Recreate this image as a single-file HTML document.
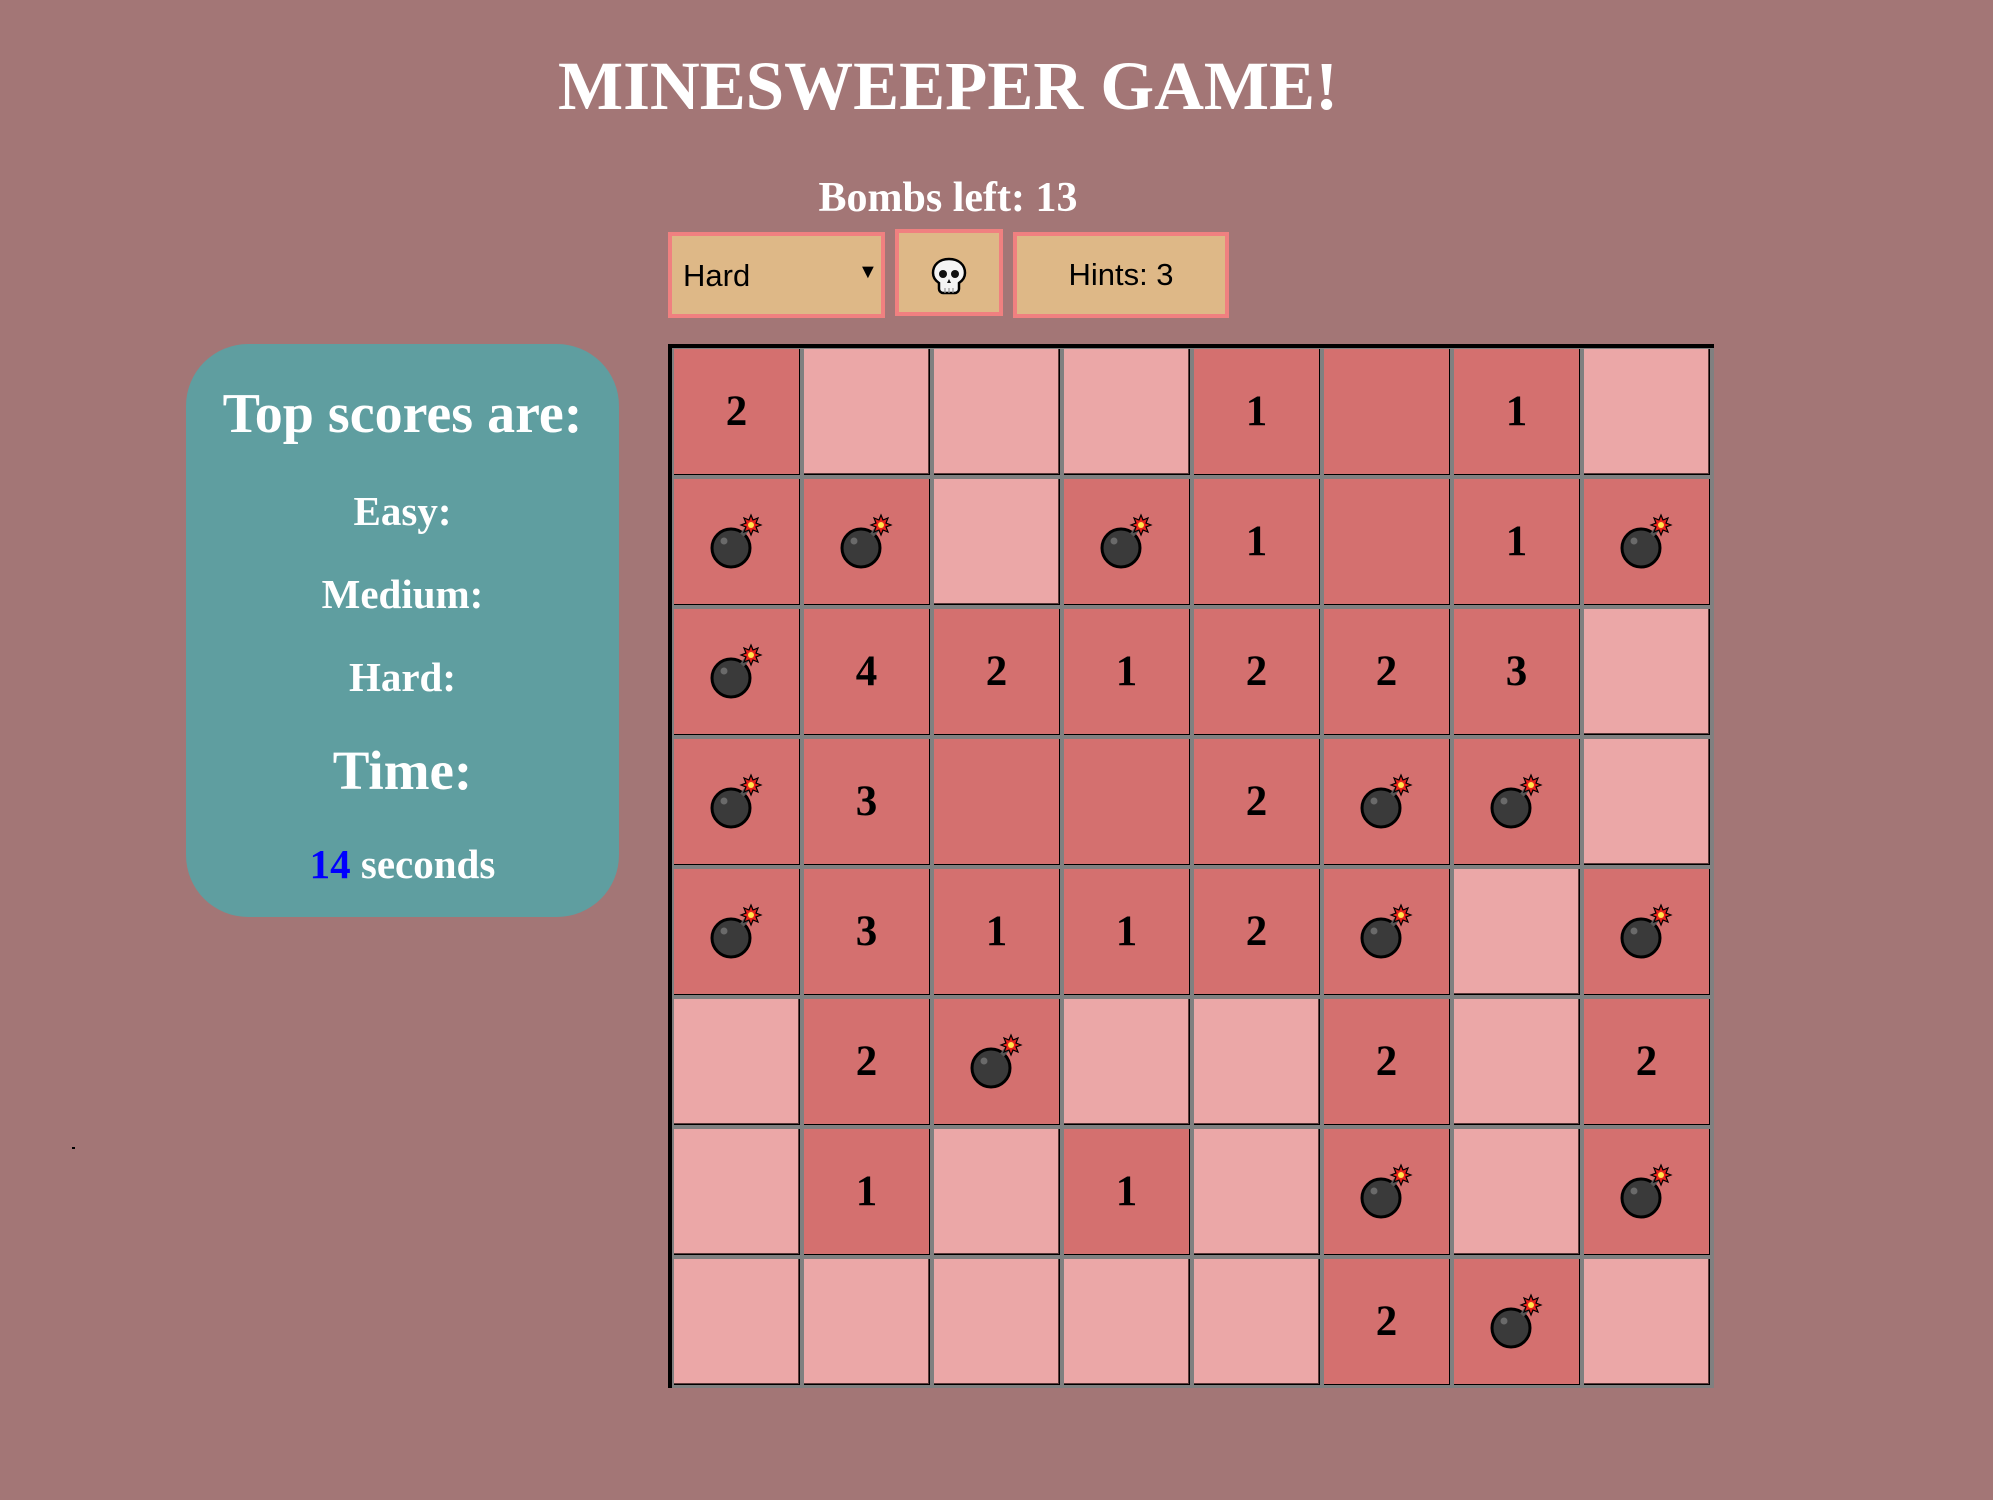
<!DOCTYPE html>
<html><head><meta charset="utf-8">
<style>
html,body{margin:0;padding:0;}
body{width:1993px;height:1500px;background:#a37676;position:relative;overflow:hidden;font-family:"Liberation Serif",serif;}
.t{position:absolute;color:#fff;font-weight:bold;white-space:nowrap;text-align:center;}
.box{position:absolute;background:#deb887;border:4px solid #f08080;box-sizing:border-box;font-family:"Liberation Sans",sans-serif;color:#000;font-size:31px;}
#panel{position:absolute;left:186px;top:344px;width:433px;height:573px;background:#5f9ea0;border-radius:62px;}
#grid{position:absolute;left:668px;top:344px;width:1042px;height:1040px;background:#808080;border-top:4px solid #000;border-left:4px solid #000;}
.c{position:absolute;width:125px;height:125px;border-right:1px solid #000;border-bottom:1px solid #000;font-weight:bold;font-size:43px;line-height:125px;text-align:center;color:#000;}
.d{background:#d4706f;}
.l{background:#eba7a7;box-shadow:inset -1px -1px 0 #5a3a3a;}
.c svg{position:absolute;left:0;top:0;}
</style></head><body>
<div class="t" style="left:0;width:1896px;top:46px;font-size:69px;line-height:80px;">MINESWEEPER GAME!</div>
<div class="t" style="left:0;width:1896px;top:173px;font-size:42px;line-height:50px;">Bombs left: 13</div>

<div class="box" style="left:668px;top:232px;width:217px;height:86px;"><span style="position:absolute;left:11px;top:22px;">Hard</span><span style="position:absolute;left:186px;top:25px;font-size:20px;">&#9660;</span></div>
<div class="box" style="left:895px;top:229px;width:108px;height:87px;">
<svg width="40" height="40" viewBox="0 0 40 40" style="position:absolute;left:30px;top:23px;"><path d="M20 3C10 3 4 9 4 17c0 5 3 8 6 10v6c0 2 2 4 4 4h12c2 0 4-2 4-4v-6c3-2 6-5 6-10C36 9 30 3 20 3z" fill="#f4f4f4" stroke="#000" stroke-width="2.5"/><circle cx="14" cy="18" r="4" fill="#111"/><circle cx="26" cy="18" r="4" fill="#111"/><path d="M20 23l-2 4h4z" fill="#111"/><path d="M16 32v5M20 32v5M24 32v5" stroke="#999" stroke-width="1.2"/></svg>
</div>
<div class="box" style="left:1013px;top:232px;width:216px;height:86px;text-align:center;line-height:78px;">Hints: 3</div>

<div id="panel">
<div class="t" style="left:0;width:433px;top:38px;font-size:56px;line-height:64px;">Top scores are:</div>
<div class="t" style="left:0;width:433px;top:144px;font-size:41px;line-height:46px;">Easy:</div>
<div class="t" style="left:0;width:433px;top:227px;font-size:41px;line-height:46px;">Medium:</div>
<div class="t" style="left:0;width:433px;top:310px;font-size:41px;line-height:46px;">Hard:</div>
<div class="t" style="left:0;width:433px;top:395px;font-size:55px;line-height:64px;">Time:</div>
<div class="t" style="left:0;width:433px;top:496px;font-size:41px;line-height:48px;"><span style="color:#0000ff;">14</span> seconds</div>
</div>
<div style="position:absolute;left:72px;top:1147px;width:3px;height:2px;background:#000;"></div>

<div id="grid">
<!-- row 0 -->
<div class="c d" style="left:2px;top:1px">2</div>
<div class="c l" style="left:132px;top:1px"></div>
<div class="c l" style="left:262px;top:1px"></div>
<div class="c l" style="left:392px;top:1px"></div>
<div class="c d" style="left:522px;top:1px">1</div>
<div class="c d" style="left:652px;top:1px"></div>
<div class="c d" style="left:782px;top:1px">1</div>
<div class="c l" style="left:912px;top:1px"></div>
<!-- row 1 -->
<div class="c d" style="left:2px;top:131px"><svg width="126" height="126"><circle cx="57" cy="69" r="19" fill="#3a3a3a" stroke="#000" stroke-width="3"/><circle cx="50" cy="62" r="3.5" fill="#6a6a6a"/><path d="M68 56l6-7" stroke="#555" stroke-width="5"/><path d="M77 36l2 5 5-2-2 5 5 2-5 2 2 5-5-2-2 5-2-5-5 2 2-5-5-2 5-2-2-5 5 2z" fill="#e8201c" stroke="#000" stroke-width="1.2"/><circle cx="77" cy="46" r="3" fill="#ffe04a"/></svg></div>
<div class="c d" style="left:132px;top:131px"><svg width="126" height="126"><circle cx="57" cy="69" r="19" fill="#3a3a3a" stroke="#000" stroke-width="3"/><circle cx="50" cy="62" r="3.5" fill="#6a6a6a"/><path d="M68 56l6-7" stroke="#555" stroke-width="5"/><path d="M77 36l2 5 5-2-2 5 5 2-5 2 2 5-5-2-2 5-2-5-5 2 2-5-5-2 5-2-2-5 5 2z" fill="#e8201c" stroke="#000" stroke-width="1.2"/><circle cx="77" cy="46" r="3" fill="#ffe04a"/></svg></div>
<div class="c l" style="left:262px;top:131px"></div>
<div class="c d" style="left:392px;top:131px"><svg width="126" height="126"><circle cx="57" cy="69" r="19" fill="#3a3a3a" stroke="#000" stroke-width="3"/><circle cx="50" cy="62" r="3.5" fill="#6a6a6a"/><path d="M68 56l6-7" stroke="#555" stroke-width="5"/><path d="M77 36l2 5 5-2-2 5 5 2-5 2 2 5-5-2-2 5-2-5-5 2 2-5-5-2 5-2-2-5 5 2z" fill="#e8201c" stroke="#000" stroke-width="1.2"/><circle cx="77" cy="46" r="3" fill="#ffe04a"/></svg></div>
<div class="c d" style="left:522px;top:131px">1</div>
<div class="c d" style="left:652px;top:131px"></div>
<div class="c d" style="left:782px;top:131px">1</div>
<div class="c d" style="left:912px;top:131px"><svg width="126" height="126"><circle cx="57" cy="69" r="19" fill="#3a3a3a" stroke="#000" stroke-width="3"/><circle cx="50" cy="62" r="3.5" fill="#6a6a6a"/><path d="M68 56l6-7" stroke="#555" stroke-width="5"/><path d="M77 36l2 5 5-2-2 5 5 2-5 2 2 5-5-2-2 5-2-5-5 2 2-5-5-2 5-2-2-5 5 2z" fill="#e8201c" stroke="#000" stroke-width="1.2"/><circle cx="77" cy="46" r="3" fill="#ffe04a"/></svg></div>
<!-- row 2 -->
<div class="c d" style="left:2px;top:261px"><svg width="126" height="126"><circle cx="57" cy="69" r="19" fill="#3a3a3a" stroke="#000" stroke-width="3"/><circle cx="50" cy="62" r="3.5" fill="#6a6a6a"/><path d="M68 56l6-7" stroke="#555" stroke-width="5"/><path d="M77 36l2 5 5-2-2 5 5 2-5 2 2 5-5-2-2 5-2-5-5 2 2-5-5-2 5-2-2-5 5 2z" fill="#e8201c" stroke="#000" stroke-width="1.2"/><circle cx="77" cy="46" r="3" fill="#ffe04a"/></svg></div>
<div class="c d" style="left:132px;top:261px">4</div>
<div class="c d" style="left:262px;top:261px">2</div>
<div class="c d" style="left:392px;top:261px">1</div>
<div class="c d" style="left:522px;top:261px">2</div>
<div class="c d" style="left:652px;top:261px">2</div>
<div class="c d" style="left:782px;top:261px">3</div>
<div class="c l" style="left:912px;top:261px"></div>
<!-- row 3 -->
<div class="c d" style="left:2px;top:391px"><svg width="126" height="126"><circle cx="57" cy="69" r="19" fill="#3a3a3a" stroke="#000" stroke-width="3"/><circle cx="50" cy="62" r="3.5" fill="#6a6a6a"/><path d="M68 56l6-7" stroke="#555" stroke-width="5"/><path d="M77 36l2 5 5-2-2 5 5 2-5 2 2 5-5-2-2 5-2-5-5 2 2-5-5-2 5-2-2-5 5 2z" fill="#e8201c" stroke="#000" stroke-width="1.2"/><circle cx="77" cy="46" r="3" fill="#ffe04a"/></svg></div>
<div class="c d" style="left:132px;top:391px">3</div>
<div class="c d" style="left:262px;top:391px"></div>
<div class="c d" style="left:392px;top:391px"></div>
<div class="c d" style="left:522px;top:391px">2</div>
<div class="c d" style="left:652px;top:391px"><svg width="126" height="126"><circle cx="57" cy="69" r="19" fill="#3a3a3a" stroke="#000" stroke-width="3"/><circle cx="50" cy="62" r="3.5" fill="#6a6a6a"/><path d="M68 56l6-7" stroke="#555" stroke-width="5"/><path d="M77 36l2 5 5-2-2 5 5 2-5 2 2 5-5-2-2 5-2-5-5 2 2-5-5-2 5-2-2-5 5 2z" fill="#e8201c" stroke="#000" stroke-width="1.2"/><circle cx="77" cy="46" r="3" fill="#ffe04a"/></svg></div>
<div class="c d" style="left:782px;top:391px"><svg width="126" height="126"><circle cx="57" cy="69" r="19" fill="#3a3a3a" stroke="#000" stroke-width="3"/><circle cx="50" cy="62" r="3.5" fill="#6a6a6a"/><path d="M68 56l6-7" stroke="#555" stroke-width="5"/><path d="M77 36l2 5 5-2-2 5 5 2-5 2 2 5-5-2-2 5-2-5-5 2 2-5-5-2 5-2-2-5 5 2z" fill="#e8201c" stroke="#000" stroke-width="1.2"/><circle cx="77" cy="46" r="3" fill="#ffe04a"/></svg></div>
<div class="c l" style="left:912px;top:391px"></div>
<!-- row 4 -->
<div class="c d" style="left:2px;top:521px"><svg width="126" height="126"><circle cx="57" cy="69" r="19" fill="#3a3a3a" stroke="#000" stroke-width="3"/><circle cx="50" cy="62" r="3.5" fill="#6a6a6a"/><path d="M68 56l6-7" stroke="#555" stroke-width="5"/><path d="M77 36l2 5 5-2-2 5 5 2-5 2 2 5-5-2-2 5-2-5-5 2 2-5-5-2 5-2-2-5 5 2z" fill="#e8201c" stroke="#000" stroke-width="1.2"/><circle cx="77" cy="46" r="3" fill="#ffe04a"/></svg></div>
<div class="c d" style="left:132px;top:521px">3</div>
<div class="c d" style="left:262px;top:521px">1</div>
<div class="c d" style="left:392px;top:521px">1</div>
<div class="c d" style="left:522px;top:521px">2</div>
<div class="c d" style="left:652px;top:521px"><svg width="126" height="126"><circle cx="57" cy="69" r="19" fill="#3a3a3a" stroke="#000" stroke-width="3"/><circle cx="50" cy="62" r="3.5" fill="#6a6a6a"/><path d="M68 56l6-7" stroke="#555" stroke-width="5"/><path d="M77 36l2 5 5-2-2 5 5 2-5 2 2 5-5-2-2 5-2-5-5 2 2-5-5-2 5-2-2-5 5 2z" fill="#e8201c" stroke="#000" stroke-width="1.2"/><circle cx="77" cy="46" r="3" fill="#ffe04a"/></svg></div>
<div class="c l" style="left:782px;top:521px"></div>
<div class="c d" style="left:912px;top:521px"><svg width="126" height="126"><circle cx="57" cy="69" r="19" fill="#3a3a3a" stroke="#000" stroke-width="3"/><circle cx="50" cy="62" r="3.5" fill="#6a6a6a"/><path d="M68 56l6-7" stroke="#555" stroke-width="5"/><path d="M77 36l2 5 5-2-2 5 5 2-5 2 2 5-5-2-2 5-2-5-5 2 2-5-5-2 5-2-2-5 5 2z" fill="#e8201c" stroke="#000" stroke-width="1.2"/><circle cx="77" cy="46" r="3" fill="#ffe04a"/></svg></div>
<!-- row 5 -->
<div class="c l" style="left:2px;top:651px"></div>
<div class="c d" style="left:132px;top:651px">2</div>
<div class="c d" style="left:262px;top:651px"><svg width="126" height="126"><circle cx="57" cy="69" r="19" fill="#3a3a3a" stroke="#000" stroke-width="3"/><circle cx="50" cy="62" r="3.5" fill="#6a6a6a"/><path d="M68 56l6-7" stroke="#555" stroke-width="5"/><path d="M77 36l2 5 5-2-2 5 5 2-5 2 2 5-5-2-2 5-2-5-5 2 2-5-5-2 5-2-2-5 5 2z" fill="#e8201c" stroke="#000" stroke-width="1.2"/><circle cx="77" cy="46" r="3" fill="#ffe04a"/></svg></div>
<div class="c l" style="left:392px;top:651px"></div>
<div class="c l" style="left:522px;top:651px"></div>
<div class="c d" style="left:652px;top:651px">2</div>
<div class="c l" style="left:782px;top:651px"></div>
<div class="c d" style="left:912px;top:651px">2</div>
<!-- row 6 -->
<div class="c l" style="left:2px;top:781px"></div>
<div class="c d" style="left:132px;top:781px">1</div>
<div class="c l" style="left:262px;top:781px"></div>
<div class="c d" style="left:392px;top:781px">1</div>
<div class="c l" style="left:522px;top:781px"></div>
<div class="c d" style="left:652px;top:781px"><svg width="126" height="126"><circle cx="57" cy="69" r="19" fill="#3a3a3a" stroke="#000" stroke-width="3"/><circle cx="50" cy="62" r="3.5" fill="#6a6a6a"/><path d="M68 56l6-7" stroke="#555" stroke-width="5"/><path d="M77 36l2 5 5-2-2 5 5 2-5 2 2 5-5-2-2 5-2-5-5 2 2-5-5-2 5-2-2-5 5 2z" fill="#e8201c" stroke="#000" stroke-width="1.2"/><circle cx="77" cy="46" r="3" fill="#ffe04a"/></svg></div>
<div class="c l" style="left:782px;top:781px"></div>
<div class="c d" style="left:912px;top:781px"><svg width="126" height="126"><circle cx="57" cy="69" r="19" fill="#3a3a3a" stroke="#000" stroke-width="3"/><circle cx="50" cy="62" r="3.5" fill="#6a6a6a"/><path d="M68 56l6-7" stroke="#555" stroke-width="5"/><path d="M77 36l2 5 5-2-2 5 5 2-5 2 2 5-5-2-2 5-2-5-5 2 2-5-5-2 5-2-2-5 5 2z" fill="#e8201c" stroke="#000" stroke-width="1.2"/><circle cx="77" cy="46" r="3" fill="#ffe04a"/></svg></div>
<!-- row 7 -->
<div class="c l" style="left:2px;top:911px"></div>
<div class="c l" style="left:132px;top:911px"></div>
<div class="c l" style="left:262px;top:911px"></div>
<div class="c l" style="left:392px;top:911px"></div>
<div class="c l" style="left:522px;top:911px"></div>
<div class="c d" style="left:652px;top:911px">2</div>
<div class="c d" style="left:782px;top:911px"><svg width="126" height="126"><circle cx="57" cy="69" r="19" fill="#3a3a3a" stroke="#000" stroke-width="3"/><circle cx="50" cy="62" r="3.5" fill="#6a6a6a"/><path d="M68 56l6-7" stroke="#555" stroke-width="5"/><path d="M77 36l2 5 5-2-2 5 5 2-5 2 2 5-5-2-2 5-2-5-5 2 2-5-5-2 5-2-2-5 5 2z" fill="#e8201c" stroke="#000" stroke-width="1.2"/><circle cx="77" cy="46" r="3" fill="#ffe04a"/></svg></div>
<div class="c l" style="left:912px;top:911px"></div>
</div>
</body></html>
